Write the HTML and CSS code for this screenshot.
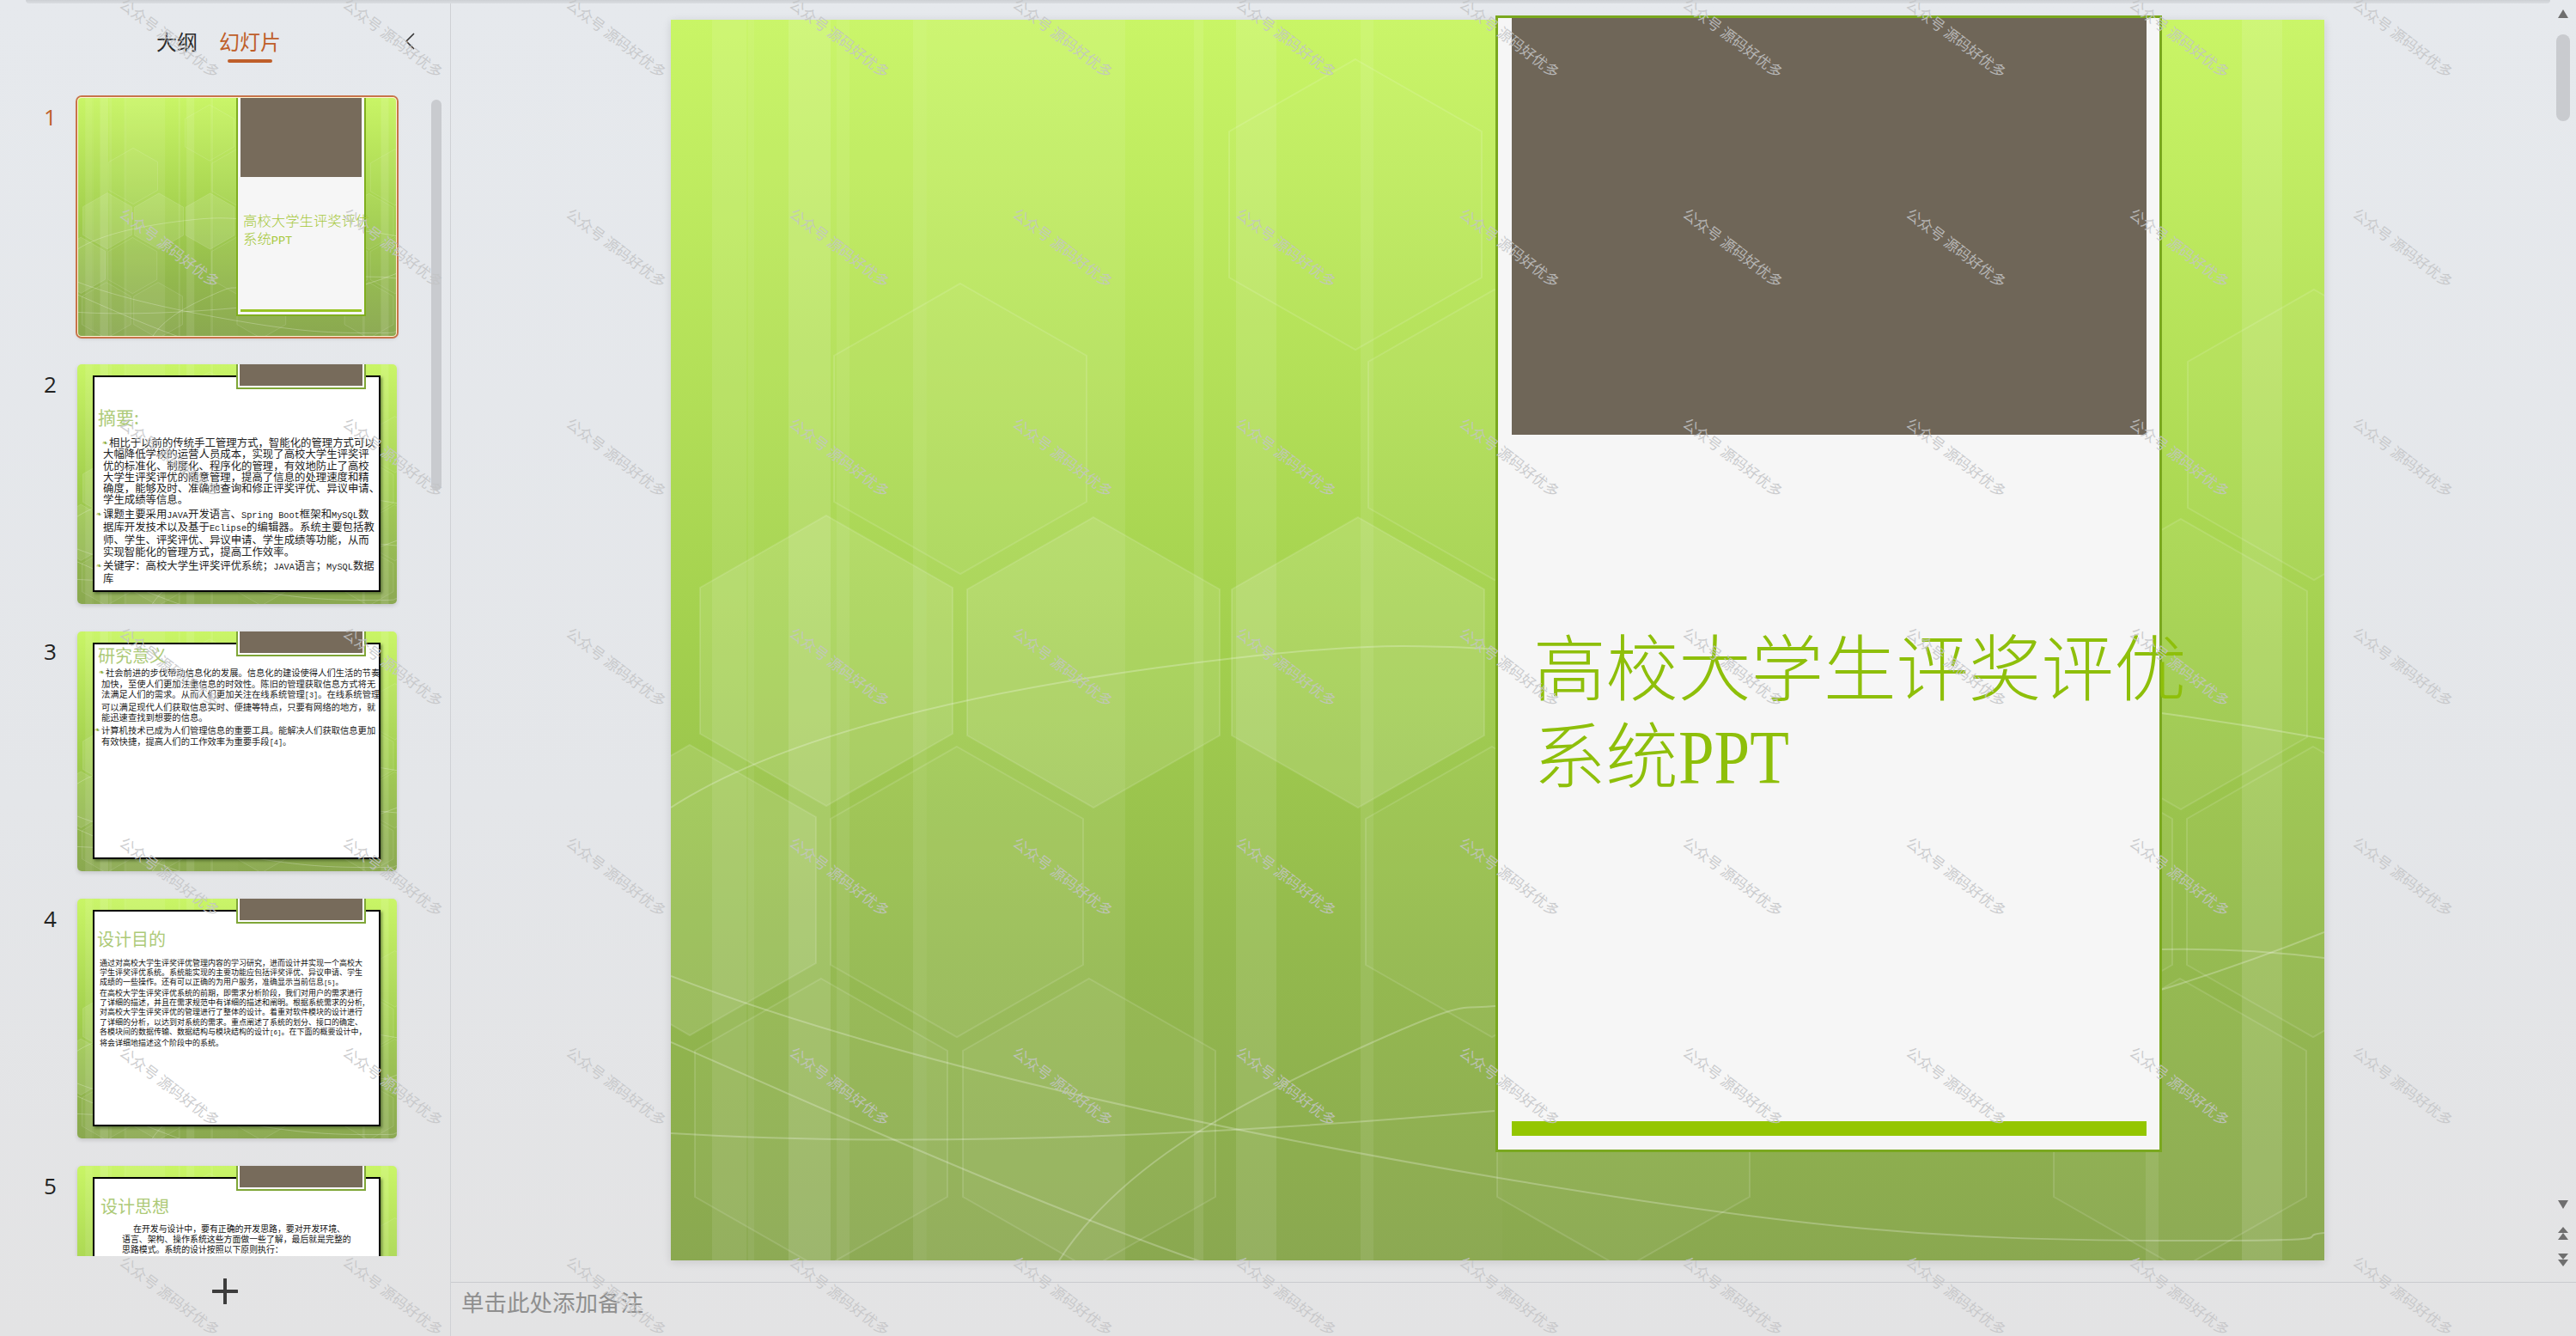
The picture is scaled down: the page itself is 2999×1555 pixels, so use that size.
FILE: index.html
```html
<!DOCTYPE html>
<html lang="zh-CN">
<head>
<meta charset="utf-8">
<title>高校大学生评奖评优系统PPT</title>
<link rel="stylesheet" href="styles.css">
</head>
<body>
<svg class="defs" aria-hidden="true">
  <defs>
    <linearGradient id="base" x1="0" y1="0" x2="0" y2="1">
      <stop offset="0" stop-color="#c9f566"/>
      <stop offset=".5" stop-color="#a3d04e"/>
      <stop offset=".75" stop-color="#93b94d"/>
      <stop offset="1" stop-color="#8aa850"/>
    </linearGradient>
    <polygon id="hex" points="0,-169 147,-85 147,85 0,169 -147,85 -147,-85" fill="#fff" stroke="#fff" stroke-opacity=".13" vector-effect="non-scaling-stroke"/>
  </defs>
  <symbol id="slidebg" viewBox="0 0 1925 1444" preserveAspectRatio="none">
    <rect width="1925" height="1444" fill="url(#base)"/>
    <g fill="#fff">
      <rect x="48" width="40" height="1444" fill-opacity=".09"/>
      <rect x="88" width="210" height="1444" fill-opacity=".03"/>
      <rect x="90" width="7" height="1444" fill-opacity=".06"/>
      <rect x="137" width="49" height="1444" fill-opacity=".12"/>
      <rect x="193" width="15" height="1444" fill-opacity=".07"/>
      <rect x="282" width="15" height="1444" fill-opacity=".09"/>
      <rect x="297" width="232" height="1444" fill-opacity=".08"/>
      <rect x="609" width="11" height="1444" fill-opacity=".09"/>
      <rect x="658" width="47" height="1444" fill-opacity=".1"/>
      <rect x="803" width="15" height="1444" fill-opacity=".09"/>
      <rect x="818" width="150" height="1444" fill-opacity=".02"/>
      <rect x="1717" width="15" height="1444" fill-opacity=".09"/>
      <rect x="1829" width="47" height="1444" fill-opacity=".12"/>
      <rect x="1876" width="49" height="1444" fill-opacity=".02"/>
    </g>
    <use href="#hex" x="797" y="215" fill-opacity=".025"/>
    <use href="#hex" x="337" y="476" fill-opacity=".03"/>
    <use href="#hex" x="959" y="483" fill-opacity=".03"/>
    <use href="#hex" x="1913" y="483" fill-opacity=".03"/>
    <use href="#hex" x="181" y="746" fill-opacity=".11"/>
    <use href="#hex" x="492" y="748" fill-opacity=".1"/>
    <use href="#hex" x="800" y="748" fill-opacity=".12"/>
    <use href="#hex" x="1758" y="750" fill-opacity=".05"/>
    <use href="#hex" x="22" y="1013" fill-opacity=".1"/>
    <use href="#hex" x="333" y="1015" fill-opacity=".03"/>
    <use href="#hex" x="956" y="1015" fill-opacity=".03"/>
    <use href="#hex" x="1601" y="1015" fill-opacity=".03"/>
    <use href="#hex" x="1912" y="1015" fill-opacity=".03"/>
    <use href="#hex" x="175" y="1285" fill-opacity=".04"/>
    <use href="#hex" x="487" y="1285" fill-opacity=".04"/>
    <use href="#hex" x="1109" y="1285" fill-opacity=".04"/>
    <use href="#hex" x="1757" y="1285" fill-opacity=".03"/>
    <g fill="none" stroke="#fff" stroke-opacity=".25">
      <path vector-effect="non-scaling-stroke" d="M0 917C150 820 420 770 656 743S900 736 1100 736"/>
      <path vector-effect="non-scaling-stroke" d="M0 1113C250 1210 620 1290 970 1349S1480 1420 1732 1421S1880 1416 1925 1412"/>
      <path vector-effect="non-scaling-stroke" d="M0 1190C170 1265 340 1340 492 1399S620 1444 660 1460"/>
      <path vector-effect="non-scaling-stroke" d="M0 1296C200 1308 500 1310 959 1270"/>
      <path vector-effect="non-scaling-stroke" d="M452 1444C520 1340 640 1270 804 1196S900 1165 1000 1140"/>
      <path vector-effect="non-scaling-stroke" d="M1735 807Q1830 820 1925 837"/>
      <path vector-effect="non-scaling-stroke" d="M1735 1129Q1830 1100 1925 1062"/>
      <path vector-effect="non-scaling-stroke" d="M1735 1082Q1830 1080 1925 1092"/>
    </g>
  </symbol>
</svg>

<div class="topshade"></div>
<div class="app">
  <aside class="side">
    <header class="tabs">
      <span class="tab">大纲</span>
      <span class="tab tab-on">幻灯片</span>
      <svg class="chev" viewBox="0 0 12 20"><path d="M11 1 2 10l9 9" fill="none" stroke="#333" stroke-width="1.6"/></svg>
    </header>
    <div class="list">
      <div class="rows">
        <div class="row">
          <span class="num num-on">1</span>
          <div class="thumb thumb-on">
            <svg class="thumb-bg"><use href="#slidebg"/></svg>
            <div class="mini">
              <div class="mini-brown"></div>
              <div class="mini-title">高校大学生评奖评优<br>系统<span class="lat">PPT</span></div>
              <div class="mini-bar"></div>
            </div>
          </div>
        </div>
        <div class="row">
          <span class="num">2</span>
          <div class="thumb">
            <svg class="thumb-bg"><use href="#slidebg"/></svg>
            <div class="card card-2">
              <div class="card-title">摘要:</div>
              <p class="para first">相比于以前的传统手工管理方式，智能化的管理方式可以<br>大幅降低学校的运营人员成本，实现了高校大学生评奖评<br>优的标准化、制度化、程序化的管理，有效地防止了高校<br>大学生评奖评优的随意管理，提高了信息的处理速度和精<br>确度，能够及时、准确地查询和修正评奖评优、异议申请、<br>学生成绩等信息。</p>
              <p class="para">课题主要采用<span class="lat">JAVA</span>开发语言、<span class="lat">Spring Boot</span>框架和<span class="lat">MySQL</span>数<br>据库开发技术以及基于<span class="lat">Eclipse</span>的编辑器。系统主要包括教<br>师、学生、评奖评优、异议申请、学生成绩等功能，从而<br>实现智能化的管理方式，提高工作效率。</p>
              <p class="para">关键字：高校大学生评奖评优系统；<span class="lat">JAVA</span>语言；<span class="lat">MySQL</span>数据<br>库</p>
            </div>
            <div class="tabbox"><div class="tabbrown"></div></div>
          </div>
        </div>
        <div class="row">
          <span class="num">3</span>
          <div class="thumb">
            <svg class="thumb-bg"><use href="#slidebg"/></svg>
            <div class="card card-3">
              <div class="card-title">研究意义</div>
              <p class="para first">社会前进的步伐带动信息化的发展。信息化的建设使得人们生活的节奏<br>加快，至使人们更加注重信息的时效性。陈旧的管理获取信息方式将无<br>法满足人们的需求。从而人们更加关注在线系统管理<span class="lat">[3]</span>。在线系统管理<br>可以满足现代人们获取信息实时、便捷等特点，只要有网络的地方，就<br>能迅速查找到想要的信息。</p>
              <p class="para">计算机技术已成为人们管理信息的重要工具。能解决人们获取信息更加<br>有效快捷，提高人们的工作效率为重要手段<span class="lat">[4]</span>。</p>
            </div>
            <div class="tabbox"><div class="tabbrown"></div></div>
          </div>
        </div>
        <div class="row">
          <span class="num">4</span>
          <div class="thumb">
            <svg class="thumb-bg"><use href="#slidebg"/></svg>
            <div class="card card-4">
              <div class="card-title">设计目的</div>
              <p class="plain">通过对高校大学生评奖评优管理内容的学习研究，进而设计并实现一个高校大<br>学生评奖评优系统。系统能实现的主要功能应包括评奖评优、异议申请、学生<br>成绩的一些操作。还有可以正确的为用户服务，准确显示当前信息<span class="lat">[5]</span>。<br>在高校大学生评奖评优系统的前期，即需求分析阶段，我们对用户的需求进行<br>了详细的描述，并且在需求规范中有详细的描述和阐明。根据系统需求的分析,<br>对高校大学生评奖评优的管理进行了整体的设计。着重对软件模块的设计进行<br>了详细的分析，以达到对系统的需求。重点阐述了系统的划分、接口的确定、<br>各模块间的数据传输、数据结构与模块结构的设计<span class="lat">[6]</span>。在下面的概要设计中，<br>将会详细地描述这个阶段中的系统。</p>
            </div>
            <div class="tabbox"><div class="tabbrown"></div></div>
          </div>
        </div>
        <div class="row">
          <span class="num">5</span>
          <div class="thumb">
            <svg class="thumb-bg"><use href="#slidebg"/></svg>
            <div class="card card-5">
              <div class="card-title">设计思想</div>
              <p class="plain"><span class="indent">在开发与设计中，要有正确的开发思路，要对开发环境、</span><br>语言、架构、操作系统这些方面做一些了解，最后就是完整的<br>思路模式。系统的设计按照以下原则执行：</p>
            </div>
            <div class="tabbox"><div class="tabbrown"></div></div>
          </div>
        </div>
      </div>
      <div class="side-track"></div>
    </div>
    <div class="add">
      <svg class="plus" viewBox="0 0 30 30"><path d="M15 1v28M1 15h28" fill="none" stroke="#3c3c3c" stroke-width="4" stroke-linecap="round"/></svg>
    </div>
  </aside>

  <main class="main">
    <div class="stage">
      <section class="slide">
        <svg class="slide-bg"><use href="#slidebg"/></svg>
        <div class="panel">
          <div class="brown"></div>
          <h1 class="title">高校大学生评奖评优<br>系统<span class="ppt">PPT</span></h1>
          <div class="bar"></div>
        </div>
      </section>
      <div class="vbar">
        <svg class="arrow" viewBox="0 0 12 10"><path d="M6 0l6 10H0z"/></svg>
        <div class="vthumb"></div>
        <div class="vspace"></div>
        <svg class="arrow arrow-d" viewBox="0 0 12 10"><path d="M0 0h12L6 10z"/></svg>
        <svg class="arrow2 arrow-uu" viewBox="0 0 12 15"><path d="M6 0l6 7H0zM6 7l6 8H0z"/></svg>
        <svg class="arrow2 arrow-dd" viewBox="0 0 12 15"><path d="M0 0h12L6 7zM0 7h12L6 15z"/></svg>
      </div>
    </div>
    <footer class="notes">单击此处添加备注</footer>
  </main>
</div>

<div class="marks" aria-hidden="true">
  <span>公众号 源码好优多</span><span>公众号 源码好优多</span><span>公众号 源码好优多</span><span>公众号 源码好优多</span><span>公众号 源码好优多</span><span>公众号 源码好优多</span><span>公众号 源码好优多</span><span>公众号 源码好优多</span><span>公众号 源码好优多</span><span>公众号 源码好优多</span><span>公众号 源码好优多</span>
  <span>公众号 源码好优多</span><span>公众号 源码好优多</span><span>公众号 源码好优多</span><span>公众号 源码好优多</span><span>公众号 源码好优多</span><span>公众号 源码好优多</span><span>公众号 源码好优多</span><span>公众号 源码好优多</span><span>公众号 源码好优多</span><span>公众号 源码好优多</span><span>公众号 源码好优多</span>
  <span>公众号 源码好优多</span><span>公众号 源码好优多</span><span>公众号 源码好优多</span><span>公众号 源码好优多</span><span>公众号 源码好优多</span><span>公众号 源码好优多</span><span>公众号 源码好优多</span><span>公众号 源码好优多</span><span>公众号 源码好优多</span><span>公众号 源码好优多</span><span>公众号 源码好优多</span>
  <span>公众号 源码好优多</span><span>公众号 源码好优多</span><span>公众号 源码好优多</span><span>公众号 源码好优多</span><span>公众号 源码好优多</span><span>公众号 源码好优多</span><span>公众号 源码好优多</span><span>公众号 源码好优多</span><span>公众号 源码好优多</span><span>公众号 源码好优多</span><span>公众号 源码好优多</span>
  <span>公众号 源码好优多</span><span>公众号 源码好优多</span><span>公众号 源码好优多</span><span>公众号 源码好优多</span><span>公众号 源码好优多</span><span>公众号 源码好优多</span><span>公众号 源码好优多</span><span>公众号 源码好优多</span><span>公众号 源码好优多</span><span>公众号 源码好优多</span><span>公众号 源码好优多</span>
  <span>公众号 源码好优多</span><span>公众号 源码好优多</span><span>公众号 源码好优多</span><span>公众号 源码好优多</span><span>公众号 源码好优多</span><span>公众号 源码好优多</span><span>公众号 源码好优多</span><span>公众号 源码好优多</span><span>公众号 源码好优多</span><span>公众号 源码好优多</span><span>公众号 源码好优多</span>
  <span>公众号 源码好优多</span><span>公众号 源码好优多</span><span>公众号 源码好优多</span><span>公众号 源码好优多</span><span>公众号 源码好优多</span><span>公众号 源码好优多</span><span>公众号 源码好优多</span><span>公众号 源码好优多</span><span>公众号 源码好优多</span><span>公众号 源码好优多</span><span>公众号 源码好优多</span>
</div>
</body>
</html>
```

FILE: styles.css
```css
* { box-sizing: border-box; }
html, body { height: 100%; }
body {
  margin: 0;
  height: 1555px;
  overflow: hidden;
  position: relative;
  display: flex;
  flex-direction: column;
  font-family: "Noto Sans CJK SC", "Liberation Sans", sans-serif;
  background: linear-gradient(180deg, #e6e9ed 0, #e4e6e9 60%, #e3e3e4 100%);
  color: #333;
}
.defs { position: absolute; width: 0; height: 0; }
.topshade {
  flex: none;
  height: 4px;
  margin: 0 30px;
  border-radius: 0 0 8px 8px;
  background: linear-gradient(180deg, #cdd0d4, #dadde1);
}
.app { flex: 1; display: flex; min-height: 0; }

/* ---- left rail ---- */
.side {
  flex: none;
  width: 525px;
  border-right: 1px solid #cfd1d5;
  display: flex;
  flex-direction: column;
}
.tabs {
  flex: none;
  height: 107px;
  display: flex;
  align-items: flex-start;
  padding: 30px 0 0 182px;
  gap: 25px;
}
.tab {
  display: flex;
  flex-direction: column;
  align-items: center;
  font-size: 24px;
  line-height: 28px;
  color: #2b2b2b;
}
.tab-on { color: #bf5f2a; }
.tab-on::after {
  content: "";
  width: 52px;
  height: 4px;
  margin-top: 7px;
  border-radius: 2px;
  background: #bf5f2a;
}
.chev { width: 12px; height: 20px; margin: 4px 0 0 119px; }
.list { flex: 1; min-height: 0; display: flex; overflow: hidden; }
.rows {
  flex: none;
  width: 502px;
  padding-top: 2px;
  display: flex;
  flex-direction: column;
  gap: 32px;
}
.side-track {
  flex: none;
  width: 12px;
  height: 455px;
  margin-top: 5px;
  border-radius: 6px;
  background: #c9cbcf;
}
.row { flex: none; display: flex; align-items: flex-start; }
.num {
  flex: none;
  width: 90px;
  padding: 8px 0 0 51px;
  font-family: "Open Sans", sans-serif;
  font-size: 26px;
  line-height: 30px;
  color: #222;
}
.num-on { color: #bf5f2a; }
.thumb {
  position: relative;
  flex: none;
  width: 372px;
  height: 279px;
  border-radius: 5px;
  box-shadow: 0 2px 5px rgba(0,0,0,.14);
}
.thumb-on::after {
  content: "";
  position: absolute;
  inset: 0;
  border-radius: 5px;
  box-shadow: 0 0 0 2px #c8744a, inset 0 0 0 1px #fff6d6;
}
.thumb-bg {
  display: block;
  width: 100%;
  height: 100%;
  border-radius: 5px;
  stroke-width: 1;
}
.lat { font-family: "Liberation Mono", monospace; font-size: .83em; }
.mini {
  position: absolute;
  left: 185px;
  top: 0;
  width: 151px;
  height: 255px;
  display: flex;
  flex-direction: column;
  padding: 0 3px 3px;
  background: #f6f6f6;
  border: solid #7fae1f;
  border-width: 0 2px 2px;
  white-space: nowrap;
}
.mini-brown { flex: none; height: 93px; background: #776b5b; }
.mini-title {
  margin: 40px 0 0 3px;
  font-family: "Noto Sans CJK SC", serif;
  font-weight: 300;
  font-size: 16.4px;
  line-height: 21px;
  color: #a6c83a;
}
.mini-bar { margin-top: auto; flex: none; height: 3px; background: #98c424; }

.card {
  position: absolute;
  left: 18px;
  top: 13px;
  width: 335px;
  height: 252px;
  background: #fff;
  border: 2px solid #000;
  box-shadow: 2px 2px 3px rgba(40,60,20,.5);
  font-family: "Noto Sans CJK SC", sans-serif;
  white-space: nowrap;
}
.card-title {
  font-family: "Noto Sans CJK SC", sans-serif;
  font-size: 20px;
  line-height: 26px;
  color: #adca78;
}
.para, .plain { margin: 0; color: #222; }
.para { position: relative; }
.para::before {
  content: "❧";
  position: absolute;
  top: 0;
  left: -8px;
  font-family: "DejaVu Sans", sans-serif;
  font-size: 8px;
  color: #8aaa35;
}
.para.first { text-indent: 7px; }
.card-2 .card-title { margin: 33px 0 11px 4px; font-size: 21px; }
.card-2 .para { margin-left: 10px; font-size: 12.4px; line-height: 13.3px; }
.card-2 .para + .para { margin-top: 3px; }
.card-3 .card-title { margin: 0 0 1px 4px; }
.card-3 .para { margin-left: 8px; font-size: 10.3px; line-height: 12.5px; }
.card-3 .para + .para { margin-top: 2.5px; }
.card-3 .para.first { text-indent: 5px; }
.card-4 .card-title { margin: 19px 0 9px 3px; }
.card-4 .plain { margin-left: 6px; font-size: 9px; line-height: 11.1px; color: #111; }
.card-5 .card-title { margin: 19px 0 7px 7px; }
.card-5 .plain { margin-left: 32px; font-size: 9.9px; line-height: 12px; color: #111; }
.indent { margin-left: 13px; }
.tabbox {
  position: absolute;
  left: 185px;
  top: 0;
  width: 151px;
  height: 29px;
  padding: 0 2px 2px;
  background: #fff;
  border: solid #7fa637;
  border-width: 0 2px 2px;
}
.tabbrown { height: 25px; background: #776b5b; }
.add { flex: none; height: 93px; padding: 26px 0 0 247px; }
.plus { display: block; width: 30px; height: 30px; }

/* ---- editor ---- */
.main { flex: 1; min-width: 0; display: flex; flex-direction: column; }
.stage {
  flex: 1;
  min-height: 0;
  display: flex;
  align-items: flex-start;
  padding: 19px 0 0 256px;
}
.slide {
  position: relative;
  flex: none;
  width: 1925px;
  height: 1444px;
  box-shadow: 0 2px 10px rgba(0,0,0,.12);
}
.slide-bg { display: block; width: 100%; height: 100%; stroke-width: 2; }
.panel {
  position: absolute;
  left: 960px;
  top: -5px;
  width: 776px;
  height: 1323px;
  display: flex;
  flex-direction: column;
  padding: 0 15px 16px 16px;
  background: #f6f6f6;
  border: 3px solid #7aa81f;
}
.brown { flex: none; height: 485px; background: #6f6658; }
.title {
  margin: 215px 0 0 25px;
  font-family: "Noto Sans CJK SC", serif;
  font-weight: 300;
  font-size: 84.5px;
  line-height: 102px;
  color: #8ebf0a;
  white-space: nowrap;
}
.ppt {
  display: inline-block;
  font-family: "Liberation Serif", serif;
  font-size: 88px;
  transform: scaleX(.85);
  transform-origin: left center;
}
.bar { margin-top: auto; flex: none; height: 17px; background: #94c600; }
.vbar {
  flex: none;
  align-self: stretch;
  width: 16px;
  margin: -19px 0 0 270px;
  padding: 7px 0 18px;
  display: flex;
  flex-direction: column;
  align-items: center;
}
.arrow { flex: none; display: block; width: 12px; height: 10px; fill: #6f6f6f; }
.arrow2 { flex: none; display: block; width: 12px; height: 15px; fill: #6f6f6f; }
.vthumb {
  flex: none;
  width: 16px;
  height: 101px;
  margin-top: 19px;
  border-radius: 8px;
  background: #c9cbcf;
}
.vspace { flex: 1; }
.arrow-uu { margin-top: 21px; }
.arrow-dd { margin-top: 16px; }
.notes {
  flex: none;
  height: 63px;
  padding-left: 12px;
  border-top: 1px solid #c9cbce;
  font-size: 26.5px;
  line-height: 44px;
  color: #8f8f8f;
}

/* ---- watermark layer ---- */
.marks {
  position: absolute;
  left: 68px;
  top: -78px;
  display: grid;
  grid-template-columns: repeat(11, 260px);
  grid-template-rows: repeat(7, 244px);
  place-items: center;
  pointer-events: none;
  font-size: 17px;
  line-height: 20px;
  color: rgba(195,196,198,.85);
  white-space: nowrap;
}
.marks span { display: block; transform: rotate(37deg); }
```
